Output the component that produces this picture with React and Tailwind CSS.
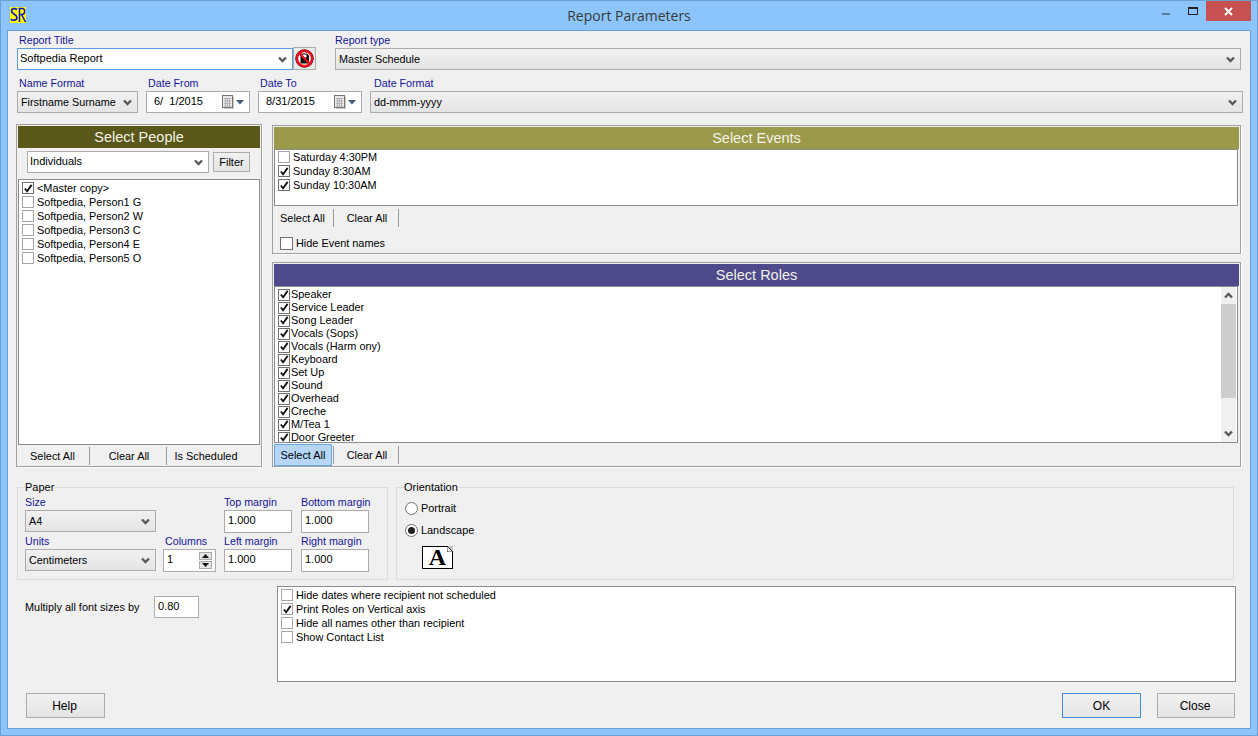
import React from "react";

const font = { fontFamily: '"Liberation Sans", Arial, sans-serif' };

const Chevron = ({ up }) => (
  <svg width="9" height="7" viewBox="0 0 9 7" className={up ? "rotate-180" : ""}>
    <path d="M1 1.5 L4.5 5 L8 1.5" fill="none" stroke="#5a5a5a" strokeWidth="2.4" />
  </svg>
);

const Check = () => (
  <svg width="11" height="11" viewBox="0 0 11 11" className="block">
    <path d="M2 5.5 L4.5 8.5 L9.5 1.5" fill="none" stroke="#111" strokeWidth="2" />
  </svg>
);

function Checkbox({ checked, dark }) {
  return (
    <span className={`flex items-center justify-center w-[12px] h-[12px] shrink-0 bg-white border ${dark ? "border-[#707070]" : "border-[#a6a6a6]"}`}>
      {checked && <Check />}
    </span>
  );
}

function Label({ children, w }) {
  return <div className={`text-[#14149a] text-[10.7px] leading-[13px] h-[13px] whitespace-nowrap ${w || ""}`}>{children}</div>;
}

function Select({ value, className }) {
  return (
    <div className={`flex items-center justify-between h-[23px] pl-[3px] pr-[5px] border border-[#acacac] bg-gradient-to-b from-[#f1f1f1] to-[#e4e4e4] text-[10.8px] text-black ${className}`}>
      <span className="whitespace-nowrap">{value}</span>
      <Chevron />
    </div>
  );
}

function DateBox({ value }) {
  return (
    <div className="flex items-center justify-between w-[104px] h-[22px] pl-[7px] pr-[5px] border border-[#acacac] bg-white text-[11px]">
      <span className="whitespace-pre pb-[2px]">{value}</span>
      <span className="flex items-center gap-[2px]">
        <svg width="12" height="14" viewBox="0 0 12 14">
          <rect x="0.5" y="0.5" width="10" height="12" fill="#e8e8e8" stroke="#7d7470" />
          <path d="M11.5 2V13.5H2" fill="none" stroke="#c9c9c9" />
          <path d="M2 3.5H9M2 6H9M2 8.5H9M2 11H9M3.5 3V11.5M5.5 3V11.5M7.5 3V11.5" stroke="#a9a9a9" strokeWidth="0.8" />
        </svg>
        <svg width="8" height="5" viewBox="0 0 8 5"><path d="M0 0H8L4 4.5Z" fill="#3f5f80" /></svg>
      </span>
    </div>
  );
}

function TextBox({ value, className }) {
  return <div className={`flex items-center h-[23px] pl-[3px] pb-[3px] border border-[#acacac] bg-white text-[11px] ${className}`}>{value}</div>;
}

function ToolButton({ children, w, active }) {
  return (
    <div className={`flex items-center justify-center h-[22px] text-[10.9px] ${w} ${active ? "bg-[#b5d6f7] border border-[#66a7e8]" : ""}`}>
      {children}
    </div>
  );
}

const Divider = () => <div className="w-px h-[18px] bg-[#9a9a9a] shrink-0" />;

function Panel({ title, color, height, children }) {
  return (
    <div className={`w-[969px] border border-[#a0a0a0] p-px shadow-[1px_1px_0_#fff] ${height}`}>
      <div className={`flex items-center justify-center h-[22px] pt-[2px] text-[14.5px] text-[#f2f2e6] ${color}`}>{title}</div>
      {children}
    </div>
  );
}

function Button({ children, className }) {
  return (
    <div className={`flex items-center justify-center w-[79px] h-[25px] border border-[#acacac] bg-gradient-to-b from-[#f1f1f1] to-[#e4e4e4] text-[12px] ${className || ""}`}>
      {children}
    </div>
  );
}

const people = [
  ["<Master copy>", true],
  ["Softpedia, Person1 G", false],
  ["Softpedia, Person2 W", false],
  ["Softpedia, Person3 C", false],
  ["Softpedia, Person4 E", false],
  ["Softpedia, Person5 O", false],
];
const events = [
  ["Saturday 4:30PM", false],
  ["Sunday 8:30AM", true],
  ["Sunday 10:30AM", true],
];
const roles = ["Speaker", "Service Leader", "Song Leader", "Vocals (Sops)", "Vocals (Harm ony)", "Keyboard", "Set Up", "Sound", "Overhead", "Creche", "M/Tea 1", "Door Greeter"];
const options = [
  ["Hide dates where recipient not scheduled", false],
  ["Print Roles on Vertical axis", true],
  ["Hide all names other than recipient", false],
  ["Show Contact List", false],
];

export default function App() {
  return (
    <div style={font} className="relative flex flex-col w-[1258px] h-[736px] overflow-hidden bg-[#8bc5fb] border border-[#6d9fd1] text-black">
      {/* Title bar */}
      <div className="relative flex items-center justify-center h-[29px] shrink-0">
        {/* SR logo */}
        <svg width="16" height="16" viewBox="0 0 16 16" className="absolute left-[9px] top-[6px]">
          <rect width="16" height="16" fill="#ffff00" />
          <path d="M7 2.5C5 0.8 1.5 1.5 1.5 4C1.5 7 7 7 7 10.5C7 13.5 2.5 14 0.8 12" fill="none" stroke="#1414c8" strokeWidth="1.7" />
          <path d="M9.5 1V15M8.5 1.5H12.5C15.5 1.5 15.5 7.5 12 7.5H9.5M11.5 7.5L15.5 15" fill="none" stroke="#1414c8" strokeWidth="1.5" />
        </svg>
        <span className="text-[14px] text-[#3a3a3a]" style={{ fontFamily: '"Open Sans", sans-serif' }}>Report Parameters</span>
        <div className="absolute left-[1161px] top-[12px] w-[8px] h-[2px] bg-[#5b7d9c]" />
        <div className="absolute left-[1187px] top-[6px] w-[10px] h-[8px] border border-[#222] border-t-2" />
        <div className="absolute left-[1205px] top-0 flex items-center justify-center w-[45px] h-[20px] bg-[#c75050]">
          <svg width="9" height="9" viewBox="0 0 9 9"><path d="M1 1L8 8M8 1L1 8" stroke="#fff" strokeWidth="2" /></svg>
        </div>
      </div>

      {/* Client area */}
      <div className="ml-[6px] w-[1244px] h-[699px] border border-[#6d9fd1] bg-[#f0f0f0] pl-[9px]">
        {/* Row 1 */}
        <div className="flex mt-[3px]">
          <div className="w-[276px]">
            <Label><span className="ml-[2px]">Report Title</span></Label>
            <div className="flex items-center justify-between h-[22px] mt-px pl-[2px] pr-[5px] border border-[#569de5] bg-white text-[11px]">
              <span className="pb-[2px]">Softpedia Report</span>
              <Chevron />
            </div>
          </div>
          <div className="flex items-center justify-center w-[23px] h-[23px] mt-[13px] border border-[#acacac] bg-[#e9e9e9]">
            <svg width="19" height="19" viewBox="0 0 19 19">
              <circle cx="9.5" cy="9.5" r="9.2" fill="#111" />
              <circle cx="9.5" cy="9.5" r="7.6" fill="#fff" stroke="#ee0f1c" strokeWidth="2.6" />
              <path d="M5.5 4.5H12L14 6.5V14.5H5.5Z" fill="#111" />
              <rect x="7.5" y="5.5" width="4" height="3" fill="#fff" />
              <path d="M4 4L15 15" stroke="#ee0f1c" strokeWidth="2.2" />
            </svg>
          </div>
          <div className="ml-[19px] w-[906px]">
            <Label>Report type</Label>
            <Select value="Master Schedule" className="mt-px !h-[22px]" />
          </div>
        </div>

        {/* Row 2 */}
        <div className="flex mt-[7px]">
          <div className="w-[121px]">
            <Label><span className="ml-[2px]">Name Format</span></Label>
            <Select value="Firstname Surname" className="mt-px !h-[22px]" />
          </div>
          <div className="ml-[8px]">
            <Label><span className="ml-[2px]">Date From</span></Label>
            <div className="mt-px"><DateBox value="6/  1/2015" /></div>
          </div>
          <div className="ml-[8px]">
            <Label><span className="ml-[2px]">Date To</span></Label>
            <div className="mt-px"><DateBox value="8/31/2015" /></div>
          </div>
          <div className="ml-[8px] w-[873px]">
            <Label><span className="ml-[4px]">Date Format</span></Label>
            <Select value="dd-mmm-yyyy" className="mt-px !h-[22px]" />
          </div>
        </div>

        {/* Selection panels */}
        <div className="flex mt-[11px]">
          <div className="w-[246px] h-[343px] border border-[#a0a0a0] p-px shadow-[1px_1px_0_#fff] -ml-px">
            <div className="flex items-center justify-center h-[22px] pt-[2px] text-[14.5px] text-[#f2f2e6] bg-[#5a571a]">Select People</div>
            <div className="flex items-center mt-[3px] ml-[9px]">
              <div className="flex items-center justify-between w-[182px] h-[22px] pl-[2px] pr-[5px] border border-[#acacac] bg-white text-[11px]">
                <span className="pb-[2px]">Individuals</span>
                <Chevron />
              </div>
              <div className="flex items-center justify-center w-[37px] h-[20px] ml-[4px] border border-[#acacac] bg-gradient-to-b from-[#f1f1f1] to-[#e4e4e4] text-[11px]">Filter</div>
            </div>
            <div className="h-[266px] mt-[6px] pt-px border border-[#8c8c8c] bg-white">
              {people.map(([name, on]) => (
                <div key={name} className="flex items-center h-[14px] pl-[3px] gap-[3px] text-[10.9px]">
                  <Checkbox checked={on} dark={on} />
                  <span>{name}</span>
                </div>
              ))}
            </div>
            <div className="flex items-center h-[22px]">
              <ToolButton w="w-[71px] pr-[2px]">Select All</ToolButton>
              <Divider />
              <ToolButton w="w-[76px] pl-[2px]">Clear All</ToolButton>
              <Divider />
              <ToolButton w="w-[80px] pr-[2px]">Is Scheduled</ToolButton>
            </div>
          </div>

          <div className="flex flex-col gap-[8px] ml-[10px] mt-px">
            <Panel title="Select Events" color="bg-[#9b9a4a]" height="h-[129px]">
              <div className="h-[57px] mr-px border border-[#8c8c8c] bg-white">
                {events.map(([name, on]) => (
                  <div key={name} className="flex items-center h-[14px] pl-[3px] gap-[3px] text-[10.9px]">
                    <Checkbox checked={on} dark={on} />
                    <span>{name}</span>
                  </div>
                ))}
              </div>
              <div className="flex items-center h-[22px] mt-px">
                <ToolButton w="w-[59px] pr-[2px]">Select All</ToolButton>
                <Divider />
                <ToolButton w="w-[64px] pl-[2px]">Clear All</ToolButton>
                <Divider />
              </div>
              <div className="flex items-center gap-[3px] mt-[6px] ml-[6px] text-[10.9px]">
                <span className="w-[13px] h-[13px] bg-white border border-[#707070]" />
                <span>Hide Event names</span>
              </div>
            </Panel>

            <Panel title="Select Roles" color="bg-[#4f4a8c]" height="h-[205px]">
              <div className="flex justify-between h-[157px] mr-px border border-[#8c8c8c] bg-white overflow-hidden">
                <div className="pt-px">
                  {roles.map((name) => (
                    <div key={name} className="flex items-center h-[13px] pl-[3px] gap-px text-[10.9px]">
                      <Checkbox checked dark />
                      <span>{name}</span>
                    </div>
                  ))}
                </div>
                <div className="flex flex-col w-[15px] mr-px bg-[#f0f0f0]">
                  <div className="flex items-center justify-center h-[17px] shrink-0"><Chevron up /></div>
                  <div className="h-[94px] shrink-0 bg-[#cdcdcd]" />
                  <div className="flex-1" />
                  <div className="flex items-center justify-center h-[17px] shrink-0"><Chevron /></div>
                </div>
              </div>
              <div className="flex items-center h-[22px] mt-px">
                <ToolButton w="w-[58px]" active>Select All</ToolButton>
                <div className="w-px" />
                <Divider />
                <ToolButton w="w-[64px] pl-[2px]">Clear All</ToolButton>
                <Divider />
              </div>
            </Panel>
          </div>
        </div>

        {/* Paper and orientation */}
        <div className="flex mt-[14px]">
          <fieldset className="w-[371px] h-[99px] border border-[#dcdcdc] pl-[7px]">
            <legend className="text-[11px] leading-[13px]">Paper</legend>
            <div className="grid grid-cols-[138px_61px_77px_68px] gap-y-[2px] mt-[2px]">
              <div>
                <Label>Size</Label>
                <Select value="A4" className="w-[131px] mt-px !h-[22px]" />
              </div>
              <div />
              <div>
                <Label>Top margin</Label>
                <TextBox value="1.000" className="w-[68px] mt-px" />
              </div>
              <div>
                <Label>Bottom margin</Label>
                <TextBox value="1.000" className="w-[68px] mt-px" />
              </div>
              <div>
                <Label>Units</Label>
                <Select value="Centimeters" className="w-[131px] mt-px !h-[22px]" />
              </div>
              <div>
                <Label><span className="ml-[2px]">Columns</span></Label>
                <div className="flex items-center justify-between w-[53px] h-[23px] mt-px pl-[3px] pr-[3px] border border-[#acacac] bg-white text-[11px]">
                  <span className="pb-[3px]">1</span>
                  <span className="flex flex-col gap-px">
                    <span className="flex items-center justify-center w-[13px] h-[8px] bg-[#e4e4e4] border border-[#acacac]">
                      <svg width="7" height="4" viewBox="0 0 7 4"><path d="M0 4H7L3.5 0Z" fill="#111" /></svg>
                    </span>
                    <span className="flex items-center justify-center w-[13px] h-[8px] bg-[#e4e4e4] border border-[#acacac]">
                      <svg width="7" height="4" viewBox="0 0 7 4"><path d="M0 0H7L3.5 4Z" fill="#111" /></svg>
                    </span>
                  </span>
                </div>
              </div>
              <div>
                <Label>Left margin</Label>
                <TextBox value="1.000" className="w-[68px] mt-px" />
              </div>
              <div>
                <Label>Right margin</Label>
                <TextBox value="1.000" className="w-[68px] mt-px" />
              </div>
            </div>
          </fieldset>

          <fieldset className="w-[838px] h-[99px] ml-[8px] border border-[#dcdcdc] pl-[8px]">
            <legend className="-ml-px text-[11px] leading-[13px]">Orientation</legend>
            <div className="flex items-center gap-[3px] mt-[6px] text-[10.9px]">
              <span className="w-[13px] h-[13px] rounded-full bg-white border border-[#707070]" />
              <span>Portrait</span>
            </div>
            <div className="flex items-center gap-[3px] mt-[6px] text-[10.9px]">
              <span className="flex items-center justify-center w-[13px] h-[13px] rounded-full bg-white border border-[#707070]">
                <span className="w-[7px] h-[7px] rounded-full bg-[#222]" />
              </span>
              <span>Landscape</span>
            </div>
            <div className="relative flex items-center justify-center w-[31px] h-[23px] mt-[7px] ml-[17px] border border-black bg-white text-[24px] leading-[22px] font-bold" style={{ fontFamily: '"Liberation Serif", serif' }}>
              A
              <svg width="6" height="6" viewBox="0 0 6 6" className="absolute -top-px -right-px">
                <path d="M0 0H6V6Z" fill="#c4c4c4" />
                <path d="M0 0L6 6H0Z" fill="#fff" stroke="#000" strokeWidth="0.8" />
              </svg>
            </div>
          </fieldset>
        </div>

        {/* Font scale and options */}
        <div className="flex mt-[6px]">
          <div className="flex items-start w-[260px] pl-[8px] pt-[10px] text-[10.9px]">
            <span className="w-[129px] pt-[3px] whitespace-nowrap">Multiply all font sizes by</span>
            <TextBox value="0.80" className="w-[45px] !h-[22px] !pb-[2px]" />
          </div>
          <div className="w-[959px] h-[96px] pt-px border border-[#8c8c8c] bg-white">
            {options.map(([name, on]) => (
              <div key={name} className="flex items-center h-[14px] pl-[3px] gap-[3px] text-[10.9px]">
                <Checkbox checked={on} />
                <span>{name}</span>
              </div>
            ))}
          </div>
        </div>

        {/* Footer */}
        <div className="flex mt-[11px] pl-[9px]">
          <Button><span className="pr-[2px]">Help</span></Button>
          <Button className="ml-[957px] !border-[#3f8fdc]">OK</Button>
          <Button className="ml-[16px] !w-[78px]"><span className="pr-[2px]">Close</span></Button>
        </div>
      </div>
    </div>
  );
}
